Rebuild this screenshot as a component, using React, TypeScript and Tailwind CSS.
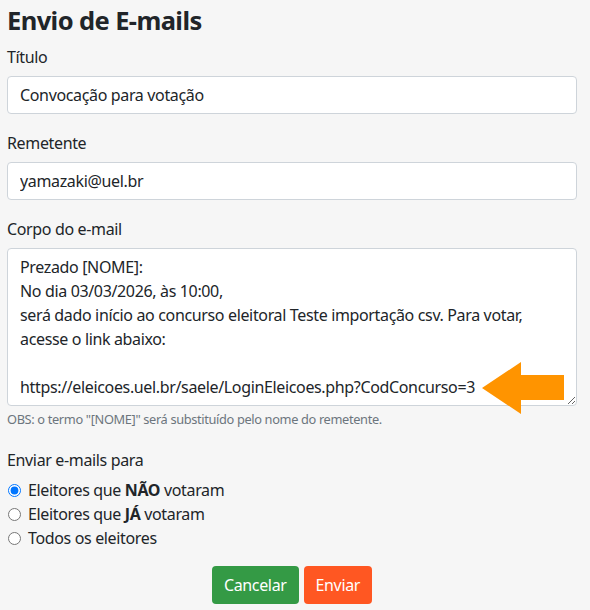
import React, { useState } from 'react';

const bodyText = `Prezado [NOME]:
No dia 03/03/2026, às 10:00,
será dado início ao concurso eleitoral Teste importação csv. Para votar, acesse o link abaixo:

https://eleicoes.uel.br/saele/LoginEleicoes.php?CodConcurso=3`;

const App: React.FC = () => {
  const [titulo, setTitulo] = useState('Convocação para votação');
  const [remetente, setRemetente] = useState('yamazaki@uel.br');
  const [corpo, setCorpo] = useState(bodyText);
  const [destino, setDestino] = useState('nao');

  return (
    <div
      className="min-h-[610px] bg-[#f6f6f6] px-[7px] text-[16px] leading-6 tracking-[-0.35px] text-[#212529]"
      style={{ fontFamily: '"Noto Sans", "Open Sans", sans-serif' }}
    >
      <div className="w-[570px]">
        {/* Header */}
        <h3 className="pt-[3px] text-[25.5px] font-bold leading-[34px] tracking-[-0.6px]">Envio de E-mails</h3>

        {/* Título */}
        <label className="mt-[8px] block">Título</label>
        <input
          value={titulo}
          onChange={(e) => setTitulo(e.target.value)}
          className="mt-[7px] block h-[38px] w-full rounded-[4px] border border-[#ced4da] bg-white px-3 outline-none"
        />

        {/* Remetente */}
        <label className="mt-[17px] block">Remetente</label>
        <input
          value={remetente}
          onChange={(e) => setRemetente(e.target.value)}
          className="mt-[7px] block h-[38px] w-full rounded-[4px] border border-[#ced4da] bg-white px-3 outline-none"
        />

        {/* Corpo */}
        <label className="mt-[17px] block">Corpo do e-mail</label>
        <div className="relative mt-[7px]">
          <textarea
            value={corpo}
            onChange={(e) => setCorpo(e.target.value)}
            className="block h-[158px] w-full rounded-[4px] border border-[#ced4da] bg-white px-3 py-[6px] outline-none"
          />
          {/* arrow annotation */}
          <svg className="pointer-events-none absolute left-[475px] top-[114px]" width="84" height="52" viewBox="0 0 84 52">
            <polygon points="0,26 39,0 39,13 82,13 82,38 39,38 39,52" fill="#ff9400" />
          </svg>
        </div>
        <p className="mt-[4px] text-[12.8px] leading-[19px] text-[#6c757d]">
          OBS: o termo "[NOME]" será substituído pelo nome do remetente.
        </p>

        {/* Destinatários */}
        <p className="mt-[19px]">Enviar e-mails para</p>
        <div className="mt-[6px]">
          {[
            { id: 'nao', label: <>Eleitores que <b>NÃO</b> votaram</> },
            { id: 'ja', label: <>Eleitores que <b>JÁ</b> votaram</> },
            { id: 'todos', label: <>Todos os eleitores</> },
          ].map((opt) => (
            <label key={opt.id} className="flex h-6 items-center">
              <input
                type="radio"
                name="destino"
                checked={destino === opt.id}
                onChange={() => setDestino(opt.id)}
                className="ml-[1px] mr-[7px] h-[13px] w-[13px] accent-[#0075ff]"
              />
              <span>{opt.label}</span>
            </label>
          ))}
        </div>

        {/* Actions */}
        <div className="mt-[16px] flex justify-center gap-[5px]">
          <button className="h-[38px] rounded-[4px] bg-[#349a45] px-3 text-white">Cancelar</button>
          <button className="h-[38px] rounded-[4px] bg-[#ff5722] px-3 text-white">Enviar</button>
        </div>
      </div>
    </div>
  );
};

export default App;
